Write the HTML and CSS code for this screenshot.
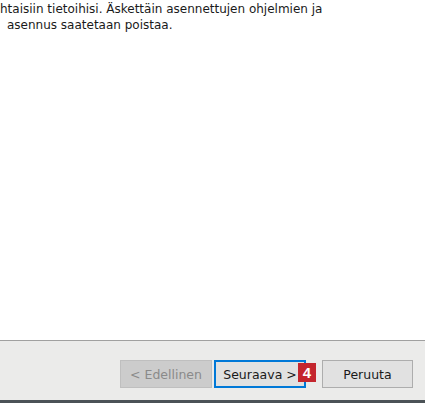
FILE: index.html
```html
<!DOCTYPE html>
<html>
<head>
<meta charset="utf-8">
<link rel="stylesheet" href="styles.css">
</head>
<body>
<div class="window">
  <div class="content">
    <p class="desc">htaisiin tietoihisi. Äskettäin asennettujen ohjelmien ja</p>
    <p class="desc second">asennus saatetaan poistaa.</p>
  </div>
  <div class="footer">
    <button class="btn disabled">&lt; Edellinen</button>
    <div class="next-wrap">
      <button class="btn primary">Seuraava &gt;</button>
      <span class="badge">4</span>
    </div>
    <button class="btn cancel">Peruuta</button>
  </div>
  <div class="bottom"></div>
</div>
</body>
</html>
```
FILE: styles.css
```css
html, body {
  margin: 0;
  padding: 0;
  background: #ffffff;
}
body {
  width: 425px;
  height: 403px;
  overflow: hidden;
  font-family: "DejaVu Sans", "Liberation Sans", sans-serif;
  font-size: 12px;
  color: #1a1a1a;
}
.window {
  display: flex;
  flex-direction: column;
  height: 403px;
}
.content {
  height: 341px;
  background: #ffffff;
  overflow: hidden;
  border-bottom: 1px solid #a0a0a0;
  padding-top: 1px;
  box-sizing: border-box;
}
.desc {
  margin: 0;
  line-height: 16px;
  white-space: nowrap;
}
.second {
  padding-left: 7px;
}
.footer {
  flex: 1;
  background: #ebebea;
  display: flex;
  justify-content: flex-end;
  align-items: flex-start;
  padding: 19px 12px 0 0;
}
.btn {
  box-sizing: border-box;
  height: 28px;
  width: 92px;
  font-family: "DejaVu Sans", "Liberation Sans", sans-serif;
  font-size: 12.5px;
  color: #1a1a1a;
  background: #e1e1e1;
  border: 1px solid #adadad;
  padding: 0;
  margin: 0;
}
.disabled {
  background: #cccccc;
  border-color: #bfbfbf;
  color: #8a8a8a;
  margin-right: 2px;
}
.next-wrap {
  position: relative;
  margin-right: 16px;
}
.primary {
  border: 2px solid #0078d7;
}
.badge {
  position: absolute;
  left: 84px;
  top: 3px;
  width: 18px;
  height: 19px;
  background: #c4262e;
  color: #ffffff;
  font-family: "Liberation Sans", sans-serif;
  font-weight: bold;
  font-size: 15px;
  line-height: 19px;
  text-align: center;
}
.cancel {
  width: 91px;
}
.bottom {
  height: 3px;
  background: #4b5257;
}
```
